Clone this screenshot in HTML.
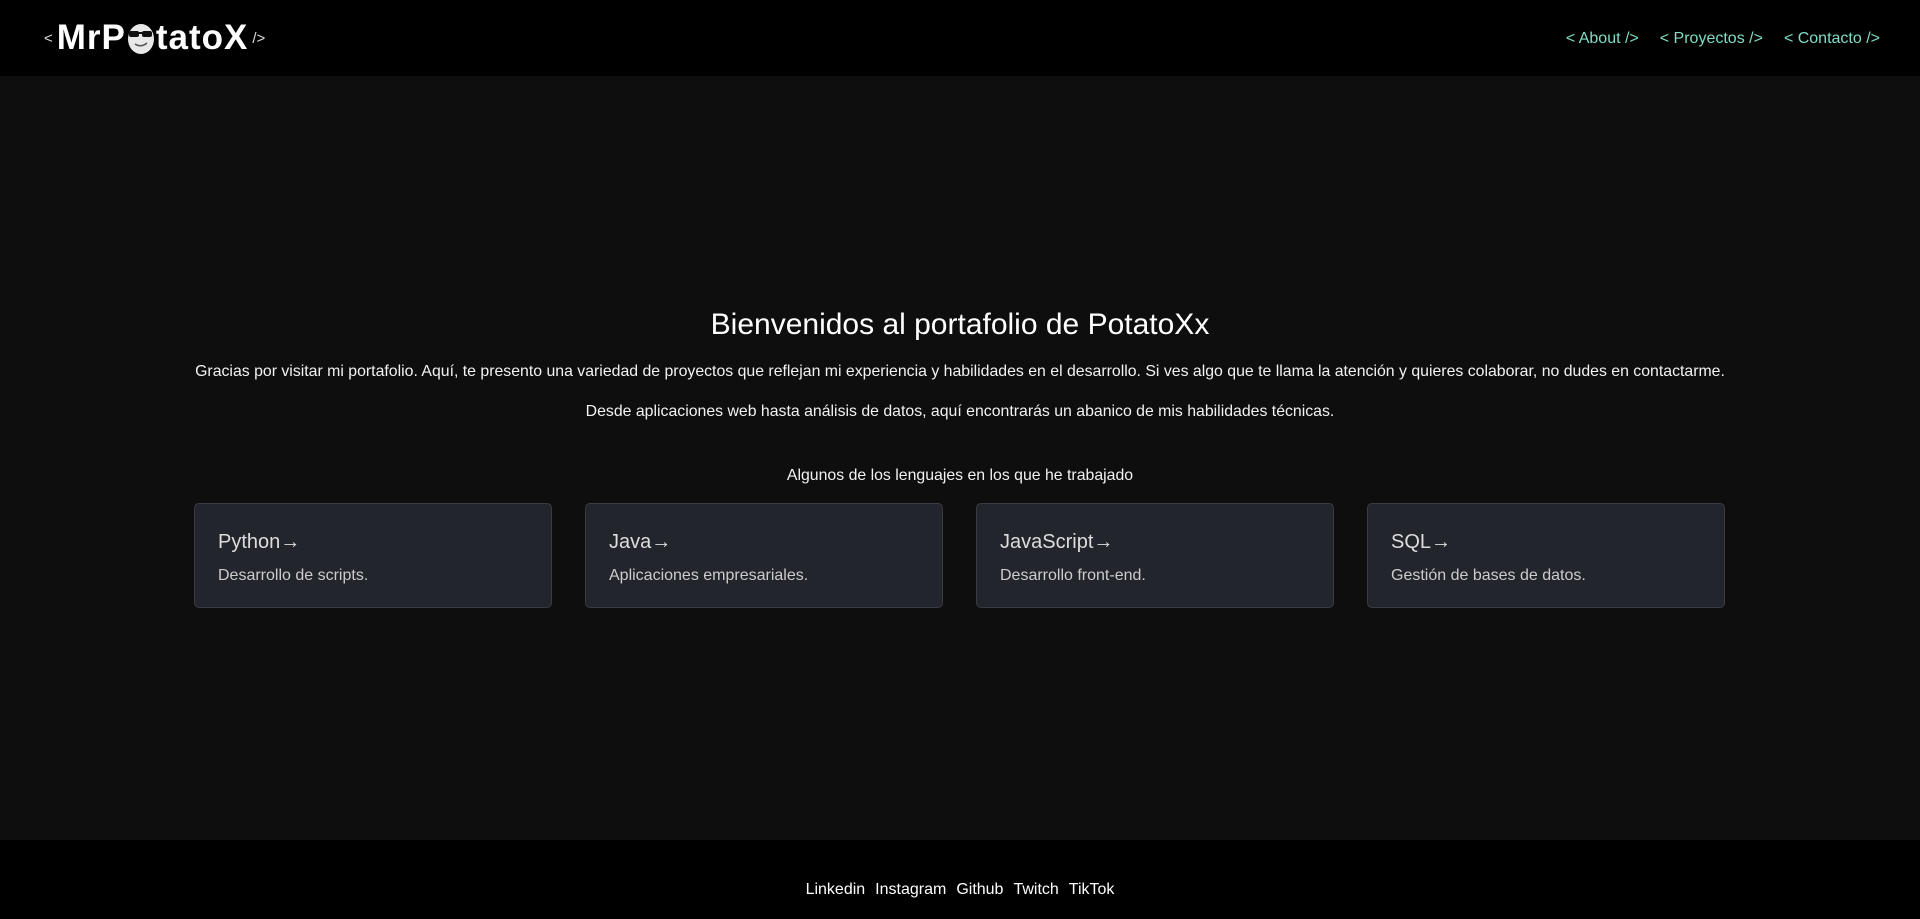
<!DOCTYPE html>
<html><head><meta charset="utf-8"><style>
*{margin:0;padding:0;box-sizing:border-box}
body{width:1920px;height:919px;background:#0e0e0e;font-family:"Liberation Sans",sans-serif;color:#fff;position:relative;overflow:hidden}
header{position:absolute;top:0;left:0;width:1920px;height:76px;background:#000}
.logo{position:absolute;left:40px;top:15px;height:46px;display:flex;align-items:center;color:#fff}
.logo .br{font-size:15px;color:#ddd;margin:0 4px}
.logo .name{font-size:35px;font-weight:bold;letter-spacing:1px;display:flex;align-items:center}
nav{position:absolute;right:40px;top:30px;font-size:16px;color:#7fdcc6}
nav span{margin-left:21px}
main{position:absolute;top:76px;left:0;width:1920px;text-align:center}
h1{position:absolute;top:232px;width:1920px;font-size:30px;font-weight:normal}
.p{position:absolute;width:1920px;font-size:15.85px;color:#f2f2f2}
.card{position:absolute;top:427px;width:358px;height:105px;background:#23252d;border:1px solid #3a3c44;border-radius:5px;text-align:left;padding:27px 23px}
.card h3{font-size:20px;font-weight:normal;color:#ddd}
.card p{font-size:16px;color:#ccc;margin-top:13px}
footer{position:absolute;top:840px;left:0;width:1920px;height:79px;background:#000;text-align:center;font-size:16px;padding-top:41px}
footer span{margin:0 5px}
</style></head><body>
<header>
<div class="logo"><span class="br">&lt;</span><span class="name">MrP<svg width="30" height="34" viewBox="0 0 30 34"><ellipse cx="15" cy="18" rx="13" ry="15" fill="#e8e8e8"/><rect x="3" y="10" width="10" height="6" rx="2" fill="#111"/><rect x="16" y="10" width="10" height="6" rx="2" fill="#111"/><rect x="12" y="11" width="5" height="2" fill="#111"/><path d="M9 23 Q15 27 21 22" stroke="#555" stroke-width="1.5" fill="none"/></svg>tatoX</span><span class="br">/&gt;</span></div>
<nav><span>&lt; About /&gt;</span><span>&lt; Proyectos /&gt;</span><span>&lt; Contacto /&gt;</span></nav>
</header>
<main>
<h1>Bienvenidos al portafolio de PotatoXx</h1>
<div class="p" style="top:287px">Gracias por visitar mi portafolio. Aquí, te presento una variedad de proyectos que reflejan mi experiencia y habilidades en el desarrollo. Si ves algo que te llama la atención y quieres colaborar, no dudes en contactarme.</div>
<div class="p" style="top:327px">Desde aplicaciones web hasta análisis de datos, aquí encontrarás un abanico de mis habilidades técnicas.</div>
<div class="p" style="top:391px">Algunos de los lenguajes en los que he trabajado</div>
<div class="card" style="left:194px"><h3>Python→</h3><p>Desarrollo de scripts.</p></div>
<div class="card" style="left:585px"><h3>Java→</h3><p>Aplicaciones empresariales.</p></div>
<div class="card" style="left:976px"><h3>JavaScript→</h3><p>Desarrollo front-end.</p></div>
<div class="card" style="left:1367px"><h3>SQL→</h3><p>Gestión de bases de datos.</p></div>
</main>
<footer><span>Linkedin</span><span>Instagram</span><span>Github</span><span>Twitch</span><span>TikTok</span></footer>
</body></html>
